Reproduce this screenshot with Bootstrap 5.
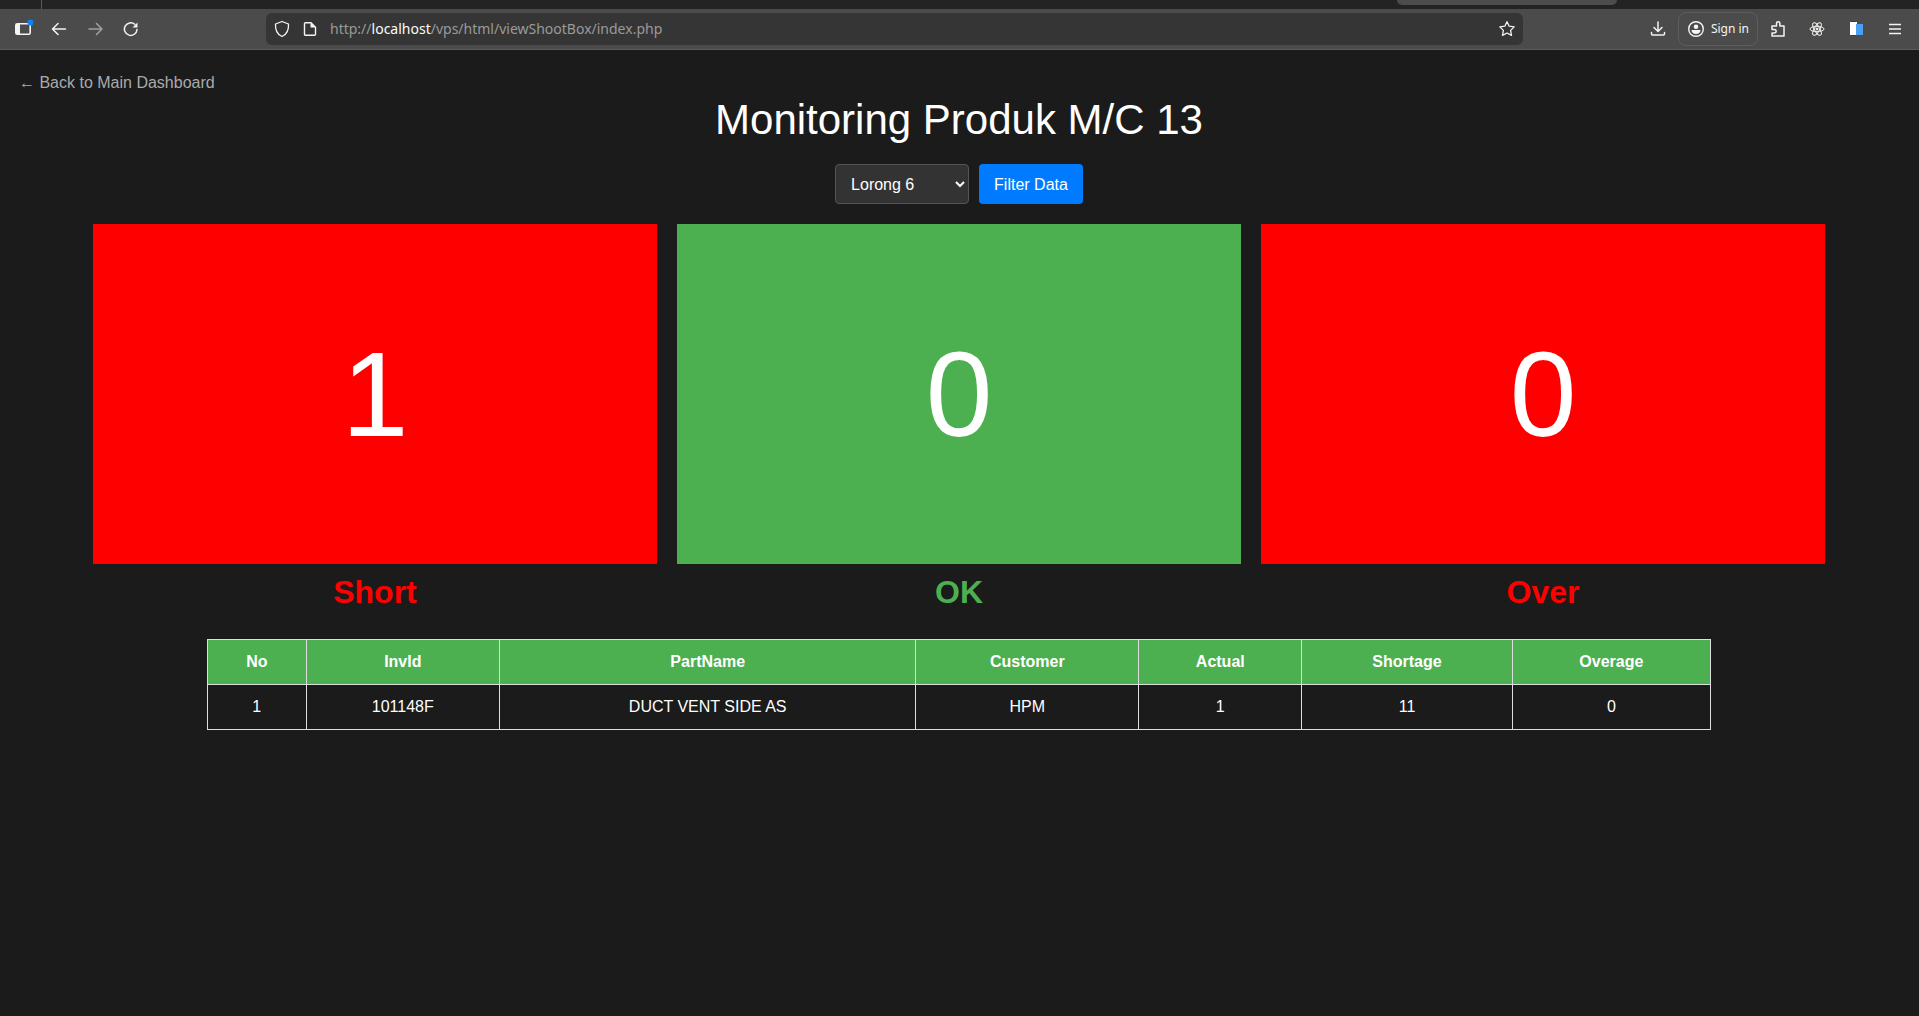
<!DOCTYPE html>
<html lang="id">
<head>
<meta charset="utf-8">
<meta name="viewport" content="width=device-width, initial-scale=1">
<title>Monitoring Produk M/C 13</title>
<link href="https://cdn.jsdelivr.net/npm/bootstrap@5.3.0/dist/css/bootstrap.min.css" rel="stylesheet">
<style>
body{background:#1b1b1b;color:#fff;font-family:"Liberation Sans",Arial,sans-serif;font-size:16px;line-height:24px;min-height:100vh}
svg{display:block;flex:none}
.tab-strip{height:9px;background:#232323}
.tab-first{width:42px;border-right:1px solid #5a5a5a}
.tab-active{width:220px;height:5px;margin-right:302px;background:#4c4c4c;border-radius:0 0 6px 6px}
.toolbar{height:41px;background:#4b4b4b;border-bottom:1px solid #5c5c5c;color:#f4f4f0;font-family:"Noto Sans",sans-serif;padding:0 16px 0 13px}
.tool-btn{background:none;border:0;padding:0;color:inherit}
.nav-tools{width:253px;gap:18px}
.end-tools{width:380px;gap:12px}
.ext-tools{gap:23px}
.url-bar{height:32px;background:#353535;border-radius:6px;padding:0 8px;gap:12px}
.url-text{font-size:14px;line-height:20px;color:#9a9a9a}
.url-text b{font-weight:400;color:#fbfbfb}
.sign-in{height:34px;border:1px solid #5e5e5e;border-radius:8px;padding:0 8px;gap:6px;font-size:12px}
.page{padding:21px 20px 20px 19px}
.back-link{color:#aaa;text-decoration:none}
.page-title{font-size:42px;line-height:50px;font-weight:400;margin:0 0 19px}
.filter-form{gap:10px;margin-bottom:20px}
.lane-select{width:134px;height:40px;background:#333;color:#fff;border:1px solid #555;border-radius:4px;padding:0 3px 0 11px}
.filter-btn{height:40px;background:#007bff;color:#fff;border:0;border-radius:4px;padding:2px 15px 0}
.stat-row{gap:20px}
.stat-col{width:30%}
.stat-box{height:340px;font-size:120px;line-height:120px}
.stat-label{font-size:32px;line-height:38px;font-weight:700;margin-top:9px}
.bg-bad{background:#f00}.bg-good{background:#4caf50}
.fg-bad{color:#f00}.fg-good{color:#4caf50}
.data-table{width:80%;margin:28px auto 0;border-collapse:collapse;text-align:center}
.data-table th,.data-table td{border:1px solid #ddd;padding:10px}
.data-table th{background:#4caf50}
</style>
<script src="https://cdn.jsdelivr.net/npm/bootstrap@5.3.0/dist/js/bootstrap.bundle.min.js"></script>
</head>
<body class="d-flex flex-column">
<header>
  <div class="tab-strip d-flex justify-content-between">
    <div class="tab-first"></div><div class="tab-active"></div>
  </div>
  <div class="toolbar d-flex align-items-center">
    <div class="nav-tools d-flex align-items-center flex-shrink-0">
      <button class="tool-btn" aria-label="Sidebar"><svg width="20" height="20" viewBox="0 0 20 20"><rect x="2.800" y="4.800" width="14.400" height="10.400" rx="1.500" fill="none" stroke="currentColor" stroke-width="1.600"/><path d="M3 5h4v10H3z" fill="currentColor"/><circle cx="17.500" cy="3.500" r="3" fill="#0a84ff"/></svg></button>
      <button class="tool-btn" aria-label="Back"><svg width="16" height="20" viewBox="0 0 16 20" fill="none" stroke="currentColor" stroke-width="1.500" stroke-linecap="round" stroke-linejoin="round"><path d="M14.500 10H1.500M7 4.500 1.500 10 7 15.500"/></svg></button>
      <button class="tool-btn opacity-50" aria-label="Forward"><svg width="20" height="20" viewBox="0 0 20 20" fill="none" stroke="currentColor" stroke-width="1.500" stroke-linecap="round" stroke-linejoin="round"><path d="M4 10h13M11.500 4.500 17 10l-5.500 5.500"/></svg></button>
      <button class="tool-btn" aria-label="Reload"><svg width="16" height="20" viewBox="0 0 16 20" fill="none" stroke="currentColor" stroke-width="1.500" stroke-linecap="round"><path d="M14 10.500A6.300 6.300 0 1 1 11.800 5.300"/><path d="M14.500 3.500v5h-5z" fill="currentColor" stroke="none"/></svg></button>
    </div>
    <div class="url-bar d-flex align-items-center flex-grow-1">
      <svg width="16" height="18" viewBox="0 0 16 18" fill="none" stroke="currentColor" stroke-width="1.300" stroke-linejoin="round"><path d="M8 1.500 14.500 4c.4 6-2 10.500-6.500 12.500C3.500 14.500 1.100 10 1.500 4z"/></svg>
      <svg width="16" height="18" viewBox="0 0 16 18"><path d="M3.500 2.700H9l4.500 4.500v7.100a1 1 0 0 1-1 1h-9a1 1 0 0 1-1-1V3.700a1 1 0 0 1 1-1z" fill="none" stroke="currentColor" stroke-width="1.400"/><path d="M8.500 2.500v5h5z" fill="currentColor"/></svg>
      <div class="url-text flex-grow-1">http://<b>localhost</b>/vps/html/viewShootBox/index.php</div>
      <button class="tool-btn" aria-label="Bookmark"><svg width="16" height="18" viewBox="0 0 16 18" fill="none" stroke="currentColor" stroke-width="1.300" stroke-linejoin="round"><path d="m8 1.700 2.200 4.500 5 .7-3.600 3.500.9 5L8 13l-4.500 2.400.9-5L.8 6.900l5-.7z"/></svg></button>
    </div>
    <div class="end-tools d-flex align-items-center justify-content-end flex-shrink-0">
      <button class="tool-btn" aria-label="Downloads"><svg width="16" height="18" viewBox="0 0 16 18" fill="none" stroke="currentColor" stroke-width="1.500" stroke-linecap="round" stroke-linejoin="round"><path d="M8 2v9M4 7.500 8 11.500l4-4M1.500 12.500v1.500a1 1 0 0 0 1 1h11a1 1 0 0 0 1-1v-1.500"/></svg></button>
      <button class="tool-btn sign-in d-flex align-items-center"><svg width="18" height="18" viewBox="0 0 18 18"><circle cx="9" cy="9" r="7.300" fill="none" stroke="currentColor" stroke-width="1.400"/><circle cx="9" cy="6.700" r="2.300" fill="currentColor"/><path d="M4.500 10h9c0 2.500-2 4-4.500 4s-4.500-1.500-4.500-4z" fill="currentColor"/></svg>Sign in</button>
      <div class="ext-tools d-flex align-items-center">
        <button class="tool-btn" aria-label="Extensions"><svg width="16" height="18" viewBox="0 0 16 18" fill="none" stroke="currentColor" stroke-width="1.500" stroke-linejoin="round"><path d="M2 8.500V6h4.500V3.500a1.700 1.700 0 0 1 3.400 0V6H14v10H2v-3h2.500a1.700 1.700 0 0 0 0-3.400H2z"/></svg></button>
        <button class="tool-btn" aria-label="React"><svg width="16" height="18" viewBox="0 0 16 18" fill="none" stroke="currentColor"><ellipse cx="8" cy="9" rx="7" ry="2.700"/><ellipse cx="8" cy="9" rx="7" ry="2.700" transform="rotate(60 8 9)"/><ellipse cx="8" cy="9" rx="7" ry="2.700" transform="rotate(120 8 9)"/><circle cx="8" cy="9" r="1" fill="currentColor"/></svg></button>
        <button class="tool-btn" aria-label="Containers"><svg width="16" height="18" viewBox="0 0 16 18"><path d="M3 1h5v15H3z" fill="#1d3f7a"/><path d="M2 2h7v13H2z" fill="#fff"/><path d="M8 4h7v11H8z" fill="#4a9ff5"/></svg></button>
        <button class="tool-btn" aria-label="Menu"><svg width="16" height="18" viewBox="0 0 16 18" stroke="currentColor" stroke-width="1.500"><path d="M2 4.500h12M2 9h12M2 13.500h12"/></svg></button>
      </div>
    </div>
  </div>
</header>
<main class="page">
  <a class="back-link d-inline-block" href="#">← Back to Main Dashboard</a>
  <h1 class="page-title text-center">Monitoring Produk M/C 13</h1>
  <form class="filter-form d-flex justify-content-center">
    <select class="lane-select" aria-label="Lorong"><option>Lorong 6</option></select>
    <button class="filter-btn" type="button">Filter Data</button>
  </form>
  <section class="stat-row d-flex justify-content-center text-center">
    <div class="stat-col"><div class="stat-box bg-bad d-flex align-items-center justify-content-center">1</div><div class="stat-label fg-bad">Short</div></div>
    <div class="stat-col"><div class="stat-box bg-good d-flex align-items-center justify-content-center">0</div><div class="stat-label fg-good">OK</div></div>
    <div class="stat-col"><div class="stat-box bg-bad d-flex align-items-center justify-content-center">0</div><div class="stat-label fg-bad">Over</div></div>
  </section>
  <table class="data-table">
    <thead><tr><th>No</th><th>InvId</th><th>PartName</th><th>Customer</th><th>Actual</th><th>Shortage</th><th>Overage</th></tr></thead>
    <tbody><tr><td>1</td><td>101148F</td><td>DUCT VENT SIDE AS</td><td>HPM</td><td>1</td><td>11</td><td>0</td></tr></tbody>
  </table>
</main>
</body>
</html>
